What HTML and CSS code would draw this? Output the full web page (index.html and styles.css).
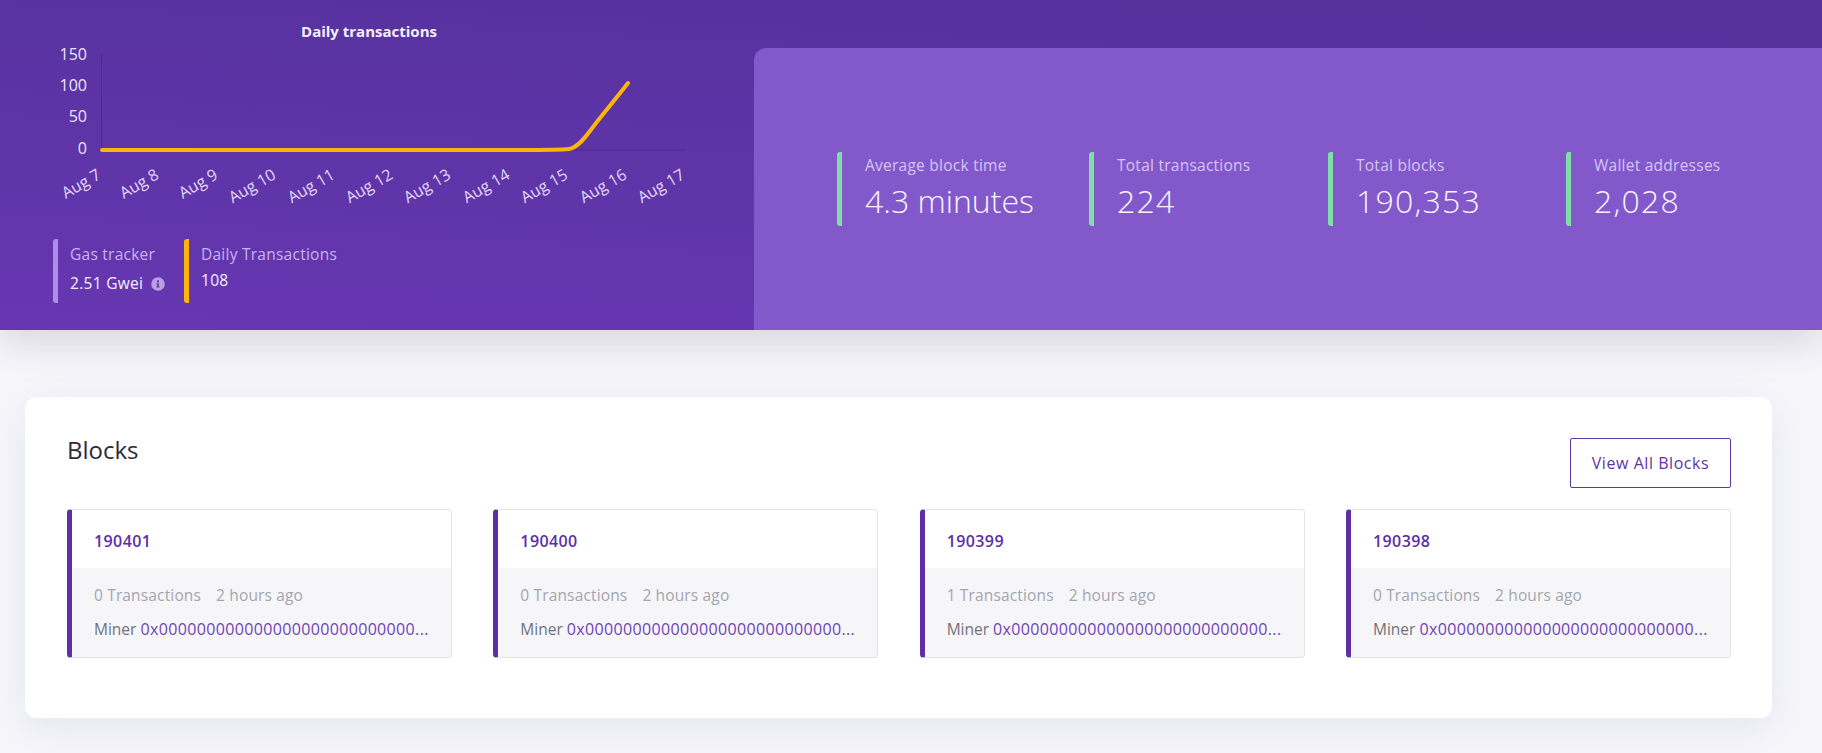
FILE: index.html
```html
<!DOCTYPE html>
<html lang="en">
<head>
<meta charset="utf-8">
<title>Blocks</title>
<link rel="stylesheet" href="styles.css">
</head>
<body>
<header class="hero">
  <section class="chart-col">
    <svg class="chart" width="754" height="239" viewBox="0 0 754 239" xmlns="http://www.w3.org/2000/svg">
      <text class="chart-title" x="369" y="37" text-anchor="middle">Daily transactions</text>
      <g class="y-labels" text-anchor="end">
        <text x="87" y="60">150</text>
        <text x="87" y="91">100</text>
        <text x="87" y="122">50</text>
        <text x="87" y="154">0</text>
      </g>
      <path class="axis" d="M101.500 54V150H686"/>
      <path class="series" d="M102 150H520C545 150 560 150 569 149C577 148 584 139 590 131C600 117 615 100 628 83"/>
      <g class="x-labels" text-anchor="end">
        <text transform="translate(102 178) rotate(-30)">Aug 7</text>
        <text transform="translate(160 178) rotate(-30)">Aug 8</text>
        <text transform="translate(219 178) rotate(-30)">Aug 9</text>
        <text transform="translate(277 178) rotate(-30)">Aug 10</text>
        <text transform="translate(336 178) rotate(-30)">Aug 11</text>
        <text transform="translate(394 178) rotate(-30)">Aug 12</text>
        <text transform="translate(452 178) rotate(-30)">Aug 13</text>
        <text transform="translate(511 178) rotate(-30)">Aug 14</text>
        <text transform="translate(569 178) rotate(-30)">Aug 15</text>
        <text transform="translate(628 178) rotate(-30)">Aug 16</text>
        <text transform="translate(686 178) rotate(-30)">Aug 17</text>
      </g>
    </svg>
    <div class="legend">
      <div class="legend-item legend-gas">
        <div class="legend-label">Gas tracker</div>
        <div class="legend-value gas-value">2.51 Gwei
          <svg class="info" viewBox="0 0 512 512" xmlns="http://www.w3.org/2000/svg"><path fill-rule="evenodd" d="M256 8a248 248 0 1 0 0 496 248 248 0 0 0 0-496zm0 110a42 42 0 1 1 0 84 42 42 0 0 1 0-84zm56 254c0 7-5 12-12 12h-88c-7 0-12-5-12-12v-24c0-7 5-12 12-12h12v-64h-12c-7 0-12-5-12-12v-24c0-7 5-12 12-12h64c7 0 12 5 12 12v100h12c7 0 12 5 12 12z"/></svg>
        </div>
      </div>
      <div class="legend-item legend-daily">
        <div class="legend-label">Daily Transactions</div>
        <div class="legend-value">108</div>
      </div>
    </div>
  </section>
  <section class="stats">
    <div class="stat"><div class="stat-label">Average block time</div><div class="stat-value">4.3 minutes</div></div>
    <div class="stat"><div class="stat-label">Total transactions</div><div class="stat-value stat-num">224</div></div>
    <div class="stat"><div class="stat-label">Total blocks</div><div class="stat-value stat-num">190,353</div></div>
    <div class="stat"><div class="stat-label">Wallet addresses</div><div class="stat-value stat-num">2,028</div></div>
  </section>
</header>
<main class="panel">
  <div class="panel-head">
    <h1 class="panel-title">Blocks</h1>
    <a class="btn" href="#">View All Blocks</a>
  </div>
  <div class="cards">
    <article class="card">
      <div class="card-top"><a class="num" href="#">190401</a></div>
      <div class="card-body">
        <div class="meta"><span>0 Transactions</span><span>2 hours ago</span></div>
        <div class="miner">Miner <a href="#">0x000000000000000000000000000...</a></div>
      </div>
    </article>
    <article class="card">
      <div class="card-top"><a class="num" href="#">190400</a></div>
      <div class="card-body">
        <div class="meta"><span>0 Transactions</span><span>2 hours ago</span></div>
        <div class="miner">Miner <a href="#">0x000000000000000000000000000...</a></div>
      </div>
    </article>
    <article class="card">
      <div class="card-top"><a class="num" href="#">190399</a></div>
      <div class="card-body">
        <div class="meta"><span>1 Transactions</span><span>2 hours ago</span></div>
        <div class="miner">Miner <a href="#">0x000000000000000000000000000...</a></div>
      </div>
    </article>
    <article class="card">
      <div class="card-top"><a class="num" href="#">190398</a></div>
      <div class="card-body">
        <div class="meta"><span>0 Transactions</span><span>2 hours ago</span></div>
        <div class="miner">Miner <a href="#">0x000000000000000000000000000...</a></div>
      </div>
    </article>
  </div>
</main>
</body>
</html>
```
FILE: styles.css
```css
* { box-sizing: border-box; }
html, body { margin: 0; height: 753px; overflow: hidden; }
body {
  background: #f6f6fb;
  font-family: "Open Sans", "Lato", sans-serif;
  color: #333;
}
a { text-decoration: none; }

.hero {
  display: flex;
  height: 330px;
  background: linear-gradient(183deg, #54319b 0%, #6737b2 100%);
  box-shadow: 0 10px 40px rgba(60, 50, 90, .18);
}
.chart-col { width: 754px; flex: none; }
.chart { display: block; }
.chart-title { font-size: 15px; font-weight: 700; fill: #f3eefc; }
.y-labels { font-size: 16px; fill: #ebe4f8; }
.x-labels { font-size: 16px; fill: #e2d8f5; }
.axis { fill: none; stroke: rgba(40, 20, 90, .28); stroke-width: 1; }
.series { fill: none; stroke: #fdb50a; stroke-width: 4; stroke-linecap: round; }

.legend { display: flex; padding-left: 53px; }
.legend-item {
  height: 64px;
  padding-left: 12px;
  border-left: 5px solid #b08be8;
  border-radius: 3px;
}
.legend-gas { width: 131px; }
.legend-daily { border-left-color: #fdb50a; }
.legend-label { font-size: 15.500px; letter-spacing: .25px; color: #c9b3f0; margin-top: 5px; line-height: 20px; }
.legend-value { font-size: 15.500px; letter-spacing: .3px; color: #f6f2fd; margin-top: 6px; line-height: 20px; white-space: nowrap; }
.gas-value { margin-top: 9px; }
.info { width: 14px; height: 14px; fill: #b9a0e6; vertical-align: -2px; margin-left: 3px; }

.stats {
  flex: 1;
  margin-top: 48px;
  background: #8358cb;
  border-radius: 12px 0 0 0;
  display: grid;
  grid-template-columns: 252px 239px 238px 1fr;
  align-items: center;
  padding-left: 83px;
}
.stat {
  height: 74px;
  padding-left: 23px;
  border-left: 5px solid #80dfa8;
  border-radius: 3px;
}
.stat-label { font-size: 15.500px; letter-spacing: .25px; line-height: 20px; color: #d6c6f3; margin-top: 3px; }
.stat-value { font-size: 32px; font-weight: 300; line-height: 40px; color: #f8f5fe; margin-top: 6px; }
.stat-num { letter-spacing: 1.200px; }

.panel {
  margin: 67px 50px 0 25px;
  height: 321px;
  padding: 41px 41px 0 42px;
  background: #fff;
  border-radius: 12px;
  box-shadow: 0 10px 40px rgba(80, 75, 130, .10);
}
.panel-head { display: flex; justify-content: space-between; align-items: flex-start; height: 71px; }
.panel-title { margin: -2px 0 0; font-size: 24px; font-weight: 400; color: #2d2a3a; line-height: 28px; }
.btn {
  width: 161px;
  height: 50px;
  display: flex;
  align-items: center;
  justify-content: center;
  border: 1px solid #5e34a8;
  border-radius: 2px;
  font-size: 16px;
  letter-spacing: .55px;
  color: #5e34a8;
}
.cards { display: grid; grid-template-columns: repeat(4, 385px); justify-content: space-between; }
.card {
  height: 149px;
  background: #f6f6f9;
  border: 1px solid #e3e3e8;
  border-left: 5px solid #5c2fa8;
  border-radius: 4px;
  overflow: hidden;
}
.card-top { height: 58px; background: #fff; padding: 21px 0 0 22px; line-height: 20px; }
.num { font-size: 16px; font-weight: 600; letter-spacing: .4px; color: #5c2fa8; }
.card-body { padding: 17px 22px 0; font-size: 15.500px; line-height: 20px; }
.meta { display: flex; gap: 15px; letter-spacing: .15px; color: #a3a5af; }
.miner { margin-top: 14px; color: #70727c; white-space: nowrap; }
.miner a { font-size: 16px; letter-spacing: .35px; color: #6d43b8; }
```
